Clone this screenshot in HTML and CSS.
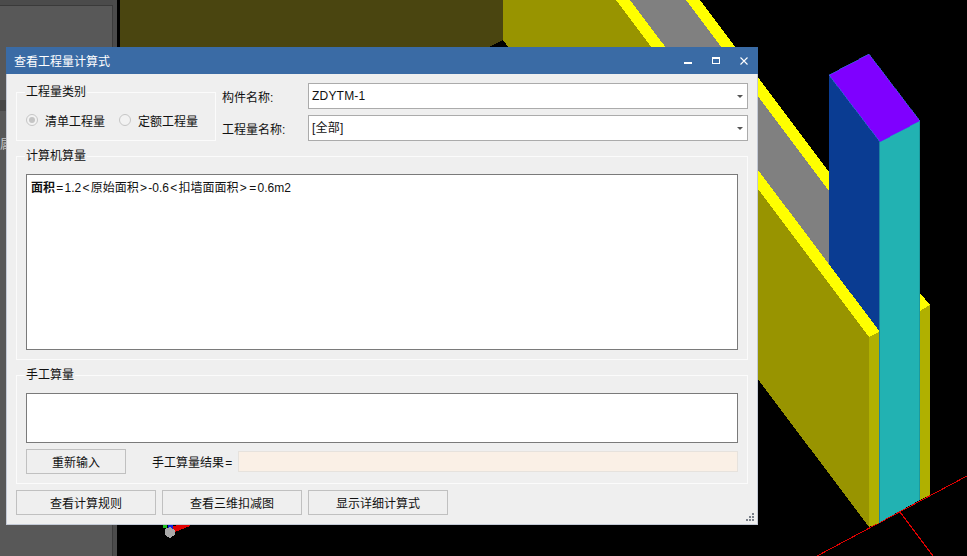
FILE: index.html
```html
<!DOCTYPE html>
<html lang="zh-CN">

<head>
    <meta charset="utf-8">
    <title>查看工程量计算式</title>
    <link rel="stylesheet" href="styles.css">
</head>

<body>
    <div class="desktop">
        <!-- left tool panel of the main program -->
        <div class="sidePanel">
            <div class="sideTop"></div>
            <div class="sideBand"></div>
            <div class="sideText">属性</div>
        </div>

        <!-- 3D view -->
        <svg class="scene" viewBox="117 0 850 556" shape-rendering="crispEdges">
            <rect x="117" y="0" width="850" height="556" fill="#000000" />
            <polyline points="817,556 967,476" fill="none" stroke="#e00000" />
            <polyline points="900,512 933,556" fill="none" stroke="#e00000" />
            <polygon points="120,0 503,0 503,40 120,232" fill="#4a4510" />
            <polygon points="503,0 617,0 869,337 869,527 503,40" fill="#989400" />
            <polygon points="630,0 687,0 829,189 829,266" fill="#808080" />
            <polygon points="686,0 700,0 829,172 829,191" fill="#ffff00" />
            <polygon points="829,75 880,142 880,333 829,266" fill="#0a3c92" />
            <polygon points="616,0 630,0 880,332 869,337" fill="#ffff00" />
            <polygon points="869,337 879,332 879,523 869,527" fill="#b0b000" />
            <polygon points="920,293 930,305 920,311" fill="#ffff00" />
            <polygon points="920,311 930,305 930,495 920,500" fill="#b0b000" />
            <polygon points="880,142 920,121 920,500 880,522" fill="#22b2b2" />
            <polyline points="879,142 879,523" fill="none" stroke="#1a84a0" />
            <polyline points="919.5,121 919.5,500" fill="none" stroke="#1c9a9e" />
            <polygon points="829,75 869,54 920,121 880,142" fill="#7f00ff" />
            <polyline points="829,75 869,54 920,121 880,142 829,75" fill="none" stroke="#2a78d8" stroke-width="0.6" />
            <!-- axis marker -->
            <polygon points="172,526 188,524 190,526 175,532" fill="#e00000" />
            <rect x="163" y="525" width="4" height="3" fill="#20c020" />
            <rect x="168" y="525" width="5" height="4" fill="#1020e0" />
            <polygon points="165,529 170,527 175,530 175,535 170,538 165,535" fill="#a8a8a8" />
        </svg>

        <div class="window">
            <div class="titleBar">
                <span class="titleText">查看工程量计算式</span>
                <svg class="titleBtn" viewBox="0 0 8 8" shape-rendering="crispEdges">
                    <rect x="0" y="5" width="8" height="2" fill="#ffffff" />
                </svg>
                <svg class="titleBtn" viewBox="0 0 8 8" shape-rendering="crispEdges">
                    <path d="M0 0H8V7H0ZM1 2V6H7V2Z" fill="#ffffff" fill-rule="evenodd" />
                </svg>
                <svg class="titleBtn" viewBox="0 0 8 8">
                    <path d="M0.5 0.5L7.5 7.5M7.5 0.5L0.5 7.5" stroke="#ffffff" stroke-width="1.1" fill="none" />
                </svg>
            </div>

            <div class="dialogBody">
                <div class="topRow">
                    <fieldset class="group typeGroup">
                        <legend>工程量类别</legend>
                        <div class="radioRow">
                            <span class="radio checked"></span>
                            <span class="radioText">清单工程量</span>
                            <span class="radio second"></span>
                            <span class="radioText">定额工程量</span>
                        </div>
                    </fieldset>
                    <div class="fieldGrid">
                        <label>构件名称:</label>
                        <div class="combo">ZDYTM-1</div>
                        <label>工程量名称:</label>
                        <div class="combo">[全部]</div>
                    </div>
                </div>

                <fieldset class="group autoGroup">
                    <legend>计算机算量</legend>
                    <div class="memo autoMemo"><b>面积</b><span class="sym">=</span>1.2<span class="sym">&lt;</span>原始面积<span class="sym">&gt;</span>-0.6<span class="sym">&lt;</span>扣墙面面积<span class="sym">&gt;</span><span class="sym">=</span>0.6m2</div>
                </fieldset>

                <fieldset class="group manualGroup">
                    <legend>手工算量</legend>
                    <div class="memo manualMemo"></div>
                    <div class="resultRow">
                        <button class="btn resetBtn">重新输入</button>
                        <span class="resultLabel">手工算量结果<span class="sym">=</span></span>
                        <div class="resultBox"></div>
                    </div>
                </fieldset>

                <div class="btnRow">
                    <button class="btn wideBtn">查看计算规则</button>
                    <button class="btn wideBtn">查看三维扣减图</button>
                    <button class="btn wideBtn">显示详细计算式</button>
                </div>

                <!-- resize grip -->
                <svg class="grip" viewBox="0 0 8 8" shape-rendering="crispEdges">
                    <path d="M6 0h2v2h-2zM3 3h2v2h-2zM6 3h2v2h-2zM0 6h2v2h-2zM3 6h2v2h-2zM6 6h2v2h-2z" fill="#7b818a" />
                </svg>
            </div>
        </div>
    </div>
</body>

</html>
```

FILE: styles.css
```css
* {
    box-sizing: border-box;
}

body {
    margin: 0;
    background: #000000;
    font-family: "Liberation Sans", "Noto Sans CJK SC", sans-serif;
    font-size: 12px;
    color: #111111;
}

.desktop {
    position: relative;
    display: flex;
    width: 967px;
    height: 556px;
    overflow: hidden;
}

/* main program, behind the dialog */
.sidePanel {
    flex: none;
    width: 117px;
    height: 556px;
    background: #585858;
    border-right: 4px solid #4c4c4c;
    box-shadow: inset -1px 0 0 #3c3c3c;
}

.sideTop {
    height: 6px;
    background: #4b4b4b;
    border-bottom: 1px solid #3a3a3a;
}

.sideBand {
    height: 11px;
    margin-top: 94px;
    background: #474747;
}

.sideText {
    margin-top: 27px;
    line-height: 14px;
    color: #c8c8c8;
}

.scene {
    display: block;
    flex: none;
    width: 850px;
    height: 556px;
}

/* dialog */
.window {
    position: absolute;
    left: 6px;
    top: 47px;
    width: 752px;
    height: 478px;
}

.titleBar {
    display: flex;
    align-items: center;
    height: 27px;
    padding: 0 10px 0 8px;
    background: #3a6ba5;
    color: #ffffff;
}

.titleText {
    flex: 1;
}

.titleBtn {
    display: block;
    width: 8px;
    height: 8px;
    margin-left: 20px;
}

.dialogBody {
    position: relative;
    height: 451px;
    padding: 9px 9px 9px 9px;
    background: #efefef;
    border: 1px solid #c4cad6;
    border-top: none;
}

.topRow {
    display: flex;
}

.group {
    margin: 0;
    min-width: 0;
    border: 1px solid #fbfbfb;
}

/* legend sits inside the padding, so pull it back */
.group legend {
    height: 16px;
    margin-left: -1px;
    padding: 0 1px;
    line-height: 17px;
}

.typeGroup {
    flex: none;
    width: 200px;
    margin-top: 1px;
    padding: 12px 9px 12px 9px;
}

.radioRow {
    display: flex;
    align-items: center;
    height: 16px;
}

.radio {
    display: flex;
    align-items: center;
    justify-content: center;
    flex: none;
    width: 12px;
    height: 12px;
    margin-right: 7px;
    border: 1px solid #c6c6c6;
    border-radius: 50%;
    background: #f2f2f2;
}

.radio.second {
    margin-left: 14px;
}

.radio.checked::after {
    content: "";
    width: 6px;
    height: 6px;
    border-radius: 50%;
    background: #c4c4c4;
}

.fieldGrid {
    display: grid;
    grid-template-columns: 86px 440px;
    grid-auto-rows: 26px;
    row-gap: 6px;
    align-items: center;
    margin-left: 6px;
}

.fieldGrid label {
    padding-top: 1px;
}

.combo {
    position: relative;
    height: 26px;
    padding-left: 3px;
    line-height: 25px;
    background: #ffffff;
    border: 1px solid #ababab;
    letter-spacing: 0.2px;
}

/* drop-down arrow */
.combo::after {
    content: "";
    position: absolute;
    right: 4px;
    top: 11px;
    border-top: 3px solid #555555;
    border-left: 3px solid transparent;
    border-right: 3px solid transparent;
}

.autoGroup {
    margin-top: 7px;
    padding: 10px 9px 9px 9px;
}

.manualGroup {
    margin-top: 7px;
    padding: 10px 9px 9px 9px;
}

.memo {
    padding: 5px 4px;
    line-height: 16px;
    background: #ffffff;
    border: 1px solid #7a7a7a;
}

/* =, < and > take more room than the digits here */
.sym {
    padding: 0 1.25px;
}

.autoMemo {
    height: 176px;
}

.manualMemo {
    height: 50px;
}

.resultRow {
    display: flex;
    align-items: center;
    margin-top: 6px;
}

.btn {
    height: 25px;
    padding: 0;
    background: #efefef;
    border: 1px solid #c0c0c0;
    border-radius: 0;
    font: inherit;
    color: #111111;
}

.resetBtn {
    flex: none;
    width: 100px;
}

.resultLabel {
    flex: none;
    width: 80px;
    margin-left: 26px;
    white-space: nowrap;
}

.resultBox {
    flex: 1;
    height: 21px;
    margin-left: 6px;
    background: #faf0e6;
    border: 1px solid #e6e2dd;
}

.btnRow {
    display: flex;
    gap: 6px;
    margin-top: 6px;
}

.wideBtn {
    width: 140px;
}

.grip {
    position: absolute;
    right: 3px;
    bottom: 3px;
    width: 8px;
    height: 8px;
}
```
